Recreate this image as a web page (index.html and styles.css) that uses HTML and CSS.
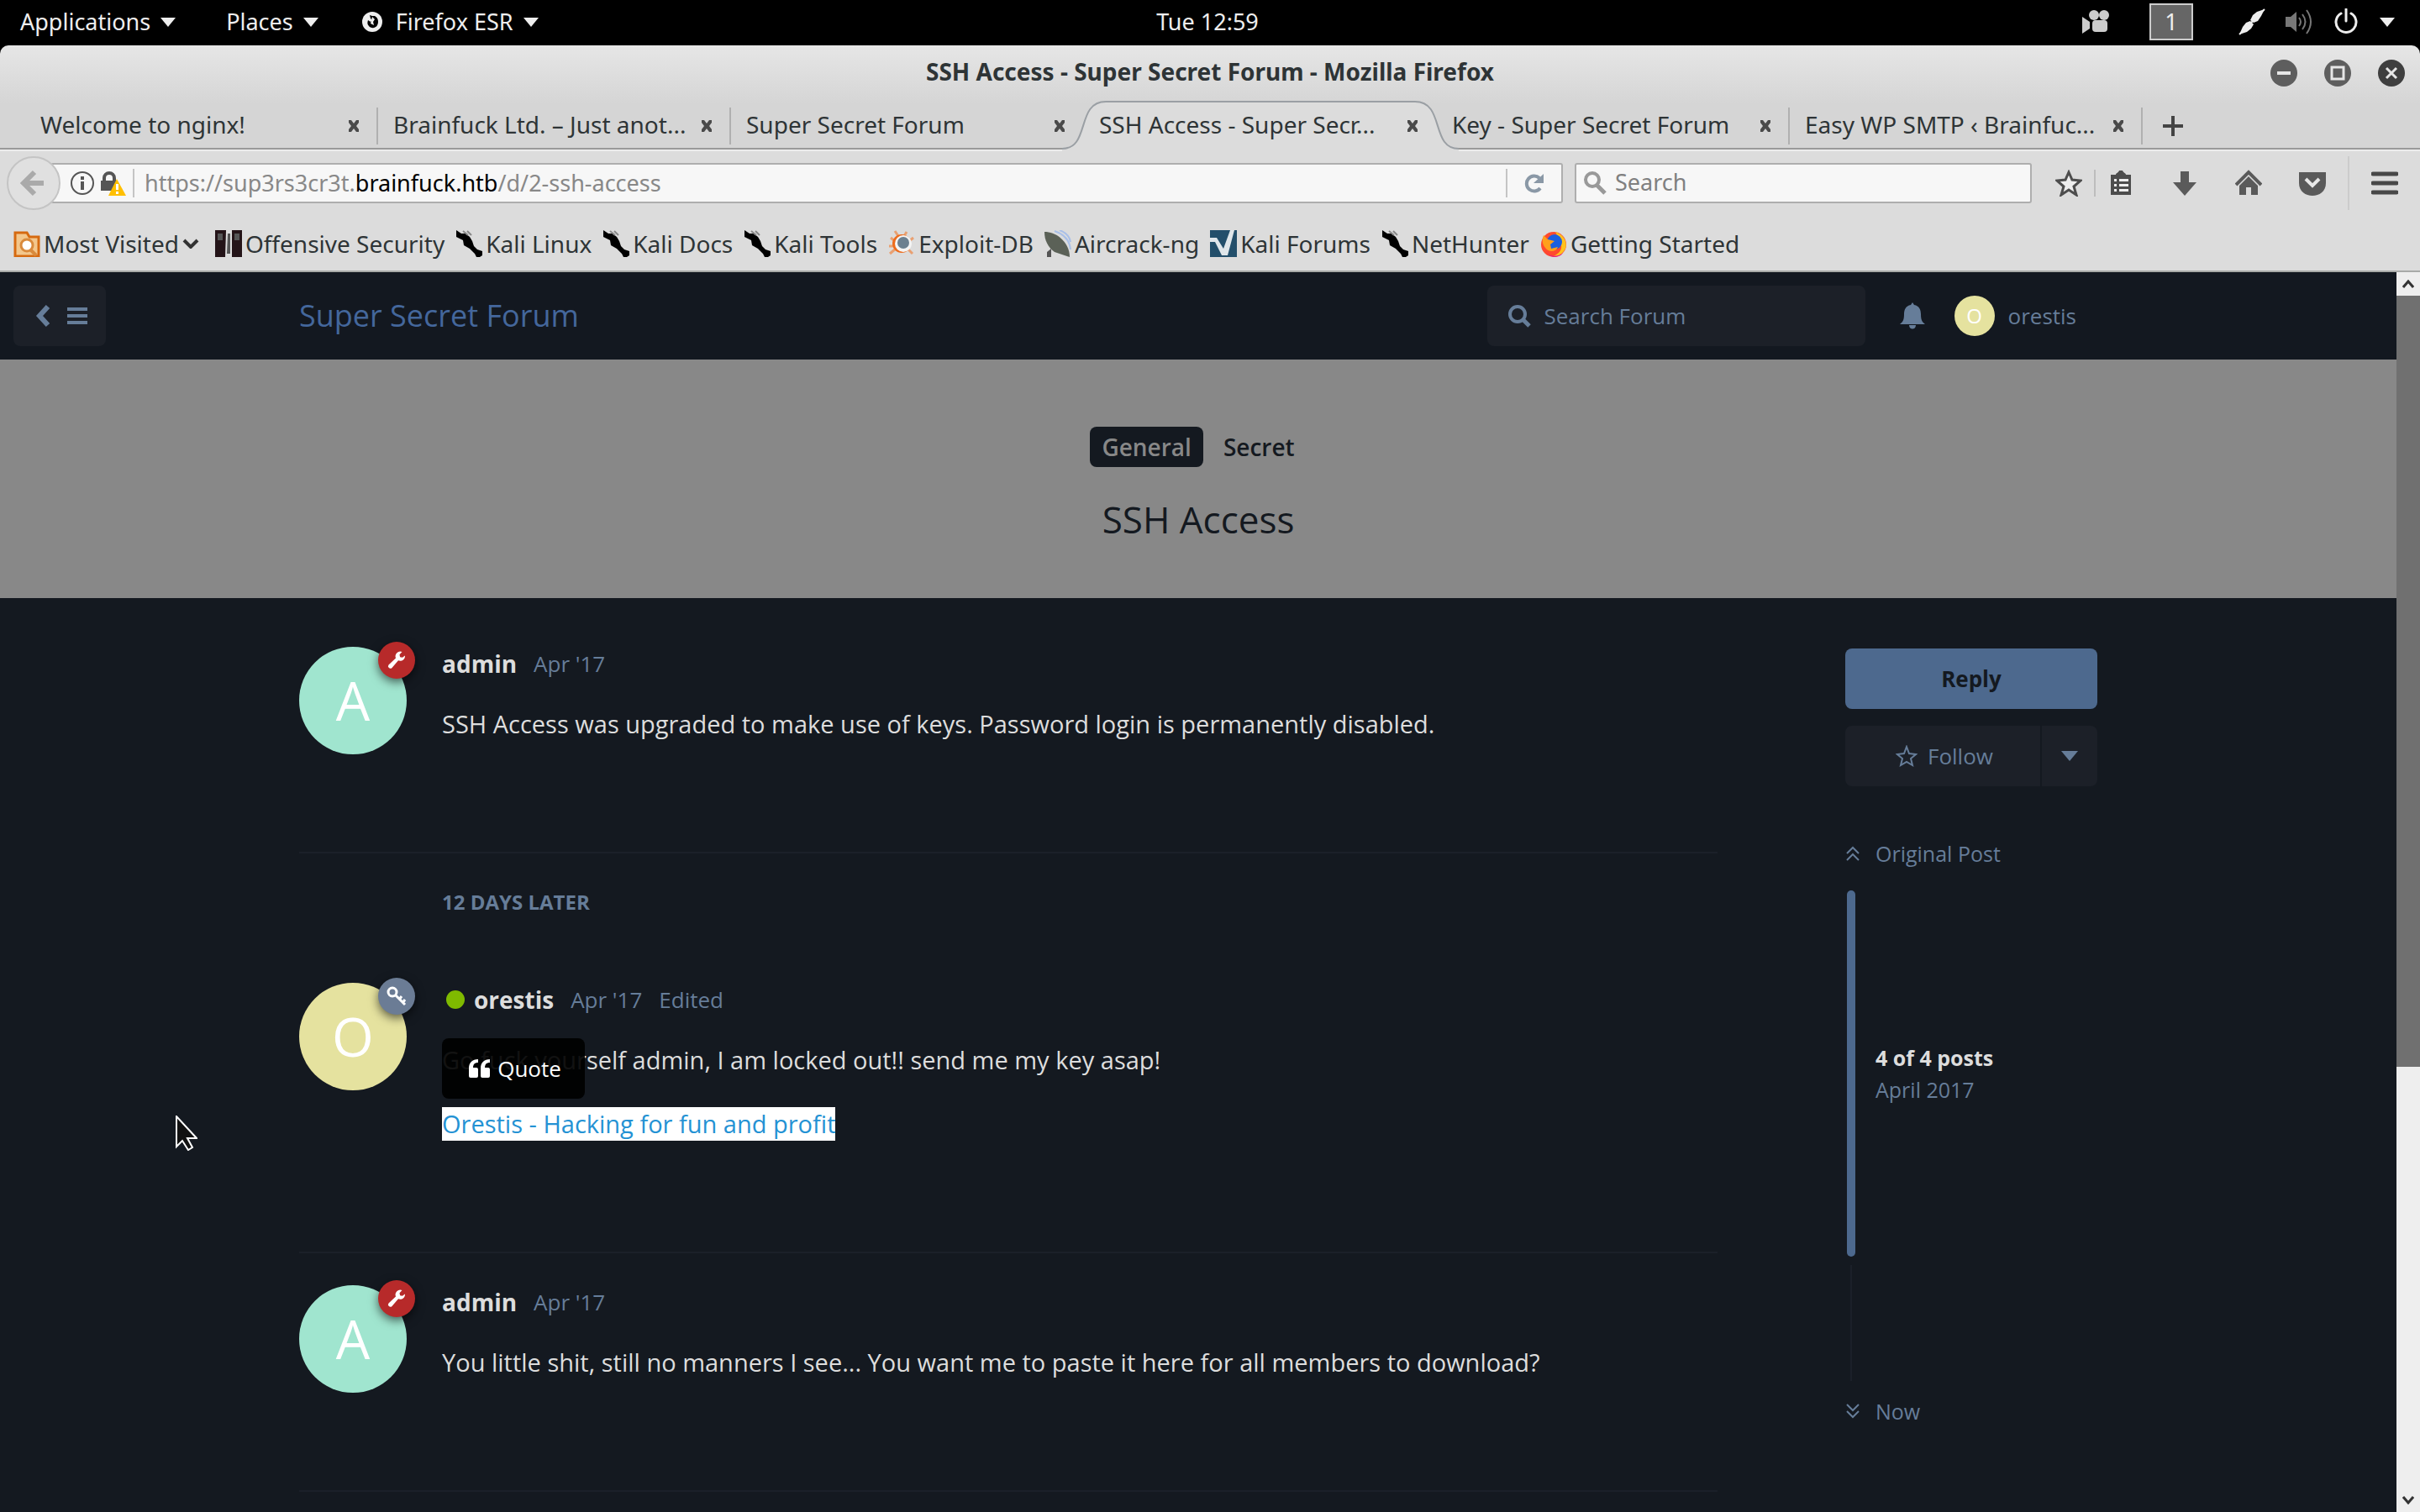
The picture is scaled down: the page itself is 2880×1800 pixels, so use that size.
FILE: index.html
```html
<!DOCTYPE html>
<html lang="en">
<head>
<meta charset="utf-8">
<title>SSH Access - Super Secret Forum</title>
<link rel="stylesheet" href="styles.css">
</head>
<body>
<svg class="defs" aria-hidden="true">
  <symbol id="i-close" viewBox="0 0 16 16"><path d="M2 1h3l3 4 3-4h3v3l-3 4 3 4v3h-3l-3-4-3 4H2v-3l3-4-3-4z"/></symbol>
  <symbol id="i-tri" viewBox="0 0 20 12"><path d="M0 0h20L10 12z"/></symbol>
  <symbol id="i-dragon" viewBox="0 0 32 32"><path d="M1 0l6 4h5l5 4 3 5 2 6 4 4 6 2v5l-3 2h-4l-2-4-6-6-7-4-1-6-8-4z"/><path d="M9 1l6 5M14 1l5 5" stroke="#888" stroke-width="2"/></symbol>
  <symbol id="i-wrench" viewBox="0 0 24 24"><path d="M22 6.500a5.800 5.800 0 0 1-8 5.800L6.500 21a2.700 2.700 0 0 1-4-3.600L11 9.500A5.800 5.800 0 0 1 18.500 2L15.500 5.200l.6 3 2.800.6z"/></symbol>
</svg>

<header class="topbar">
  <nav class="topbar-menus">
    <button class="menu">Applications <svg class="tri"><use href="#i-tri"/></svg></button>
    <button class="menu">Places <svg class="tri"><use href="#i-tri"/></svg></button>
    <button class="menu menu-app"><svg class="app-icon" viewBox="0 0 24 24"><circle cx="12" cy="12" r="12" fill="#eee"/><path d="M9 4l3 1h3c4 2 5 7 3 11-2 4-8 4-10 1-2-2-2-4-1-7l3 2 2-2-2-2z" fill="#000"/><path d="M12 6l3 3-2 3 1 4-4-2 1-4z" fill="#eee"/></svg>Firefox ESR <svg class="tri"><use href="#i-tri"/></svg></button>
  </nav>
  <time class="clock">Tue 12:59</time>
  <div class="tray">
    <svg class="tray-cam" viewBox="0 0 32 28"><g fill="#ccc"><circle cx="14" cy="6" r="6"/><circle cx="26" cy="6" r="6"/><rect x="12" y="12" width="18" height="14" rx="4"/><path d="M0 8l9 6v8l-9 6z"/></g></svg>
    <button class="workspace">1</button>
    <svg class="tray-icon tray-net" viewBox="0 0 32 32"><path d="M31 1l-4 8-4 6-5 2-4-3 3-6 5-4zM1 31l4-9 4-5 5-2 4 4-3 5-5 4z" fill="#eee"/><path d="M31 1L1 31" stroke="#eee" stroke-width="2"/></svg>
    <svg class="tray-icon" viewBox="0 0 32 32"><path d="M0 10h6l7-6v24l-7-6H0z" fill="#777"/><path d="M16 11q4 5 0 10M20 7q7 9 0 18M25 2q10 14 0 28" fill="none" stroke="#777" stroke-width="2"/></svg>
    <svg class="tray-icon" viewBox="0 0 32 32"><path d="M10 6a12 12 0 1 0 12 0M16 1v14" fill="none" stroke="#eee" stroke-width="3" stroke-linecap="round"/></svg>
    <svg class="tri"><use href="#i-tri"/></svg>
  </div>
</header>

<main class="window">
  <div class="titlebar">
    <h1 class="window-title">SSH Access - Super Secret Forum - Mozilla Firefox</h1>
    <div class="window-buttons">
      <button class="wbtn" aria-label="Minimize"><svg viewBox="0 0 32 32"><path d="M8 16h16" stroke="#e6e6e6" stroke-width="4"/></svg></button>
      <button class="wbtn" aria-label="Maximize"><svg viewBox="0 0 32 32"><rect x="9" y="9" width="14" height="14" fill="none" stroke="#e6e6e6" stroke-width="3"/></svg></button>
      <button class="wbtn wbtn-close" aria-label="Close"><svg viewBox="0 0 32 32"><path d="M10 10l12 12M22 10L10 22" stroke="#e6e6e6" stroke-width="3"/></svg></button>
    </div>
  </div>

  <div class="tabs">
    <div class="tab"><a href="#" class="tab-label">Welcome to nginx!</a><button class="tab-close" aria-label="Close tab"><svg><use href="#i-close"/></svg></button></div>
    <div class="tab"><a href="#" class="tab-label">Brainfuck Ltd. – Just anot...</a><button class="tab-close" aria-label="Close tab"><svg><use href="#i-close"/></svg></button></div>
    <div class="tab tab-before"><a href="#" class="tab-label">Super Secret Forum</a><button class="tab-close" aria-label="Close tab"><svg><use href="#i-close"/></svg></button></div>
    <div class="tab tab-active"><svg class="tab-shape" viewBox="0 0 472 62" preserveAspectRatio="none"><path d="M0 58C34 58 16 2 52 2H420C456 2 438 58 472 58V62H0z" fill="#dcdcdc"/><path d="M0 58C34 58 16 2 52 2H420C456 2 438 58 472 58" fill="none" stroke="#9a9fa4" stroke-width="2"/></svg><a href="#" class="tab-label">SSH Access - Super Secr...</a><button class="tab-close" aria-label="Close tab"><svg><use href="#i-close"/></svg></button></div>
    <div class="tab"><a href="#" class="tab-label">Key - Super Secret Forum</a><button class="tab-close" aria-label="Close tab"><svg><use href="#i-close"/></svg></button></div>
    <div class="tab"><a href="#" class="tab-label">Easy WP SMTP ‹ Brainfuc...</a><button class="tab-close" aria-label="Close tab"><svg><use href="#i-close"/></svg></button></div>
    <button class="tab-new" aria-label="New tab"><svg viewBox="0 0 24 24"><path d="M12 0v24M0 12h24" stroke="#444" stroke-width="4"/></svg></button>
  </div>

  <div class="navbar">
    <button class="back" aria-label="Back"><svg viewBox="0 0 32 32"><path d="M17 3L4 16l13 13M6 16h22" fill="none" stroke="#aaa" stroke-width="6"/></svg></button>
    <div class="urlbar">
      <svg class="url-info" viewBox="0 0 28 28"><circle cx="14" cy="14" r="13" fill="none" stroke="#555" stroke-width="2"/><path d="M12 12h4v10h-4zM12 6h4v4h-4z" fill="#555"/></svg>
      <svg class="url-lock" viewBox="0 0 30 30"><path d="M4 12V9a6 6 0 0 1 12 0v3" fill="none" stroke="#555" stroke-width="4"/><path d="M0 12h20v12H0z" fill="#555"/><path d="M19 10L30 30H9z" fill="#ffbf00"/><path d="M18 16h3v7h-3zM18 25h3v3h-3z" fill="#fff"/></svg>
      <div class="url-text" role="textbox" aria-label="Address" contenteditable="true" spellcheck="false">https://sup3rs3cr3t.<b>brainfuck.htb</b>/d/2-ssh-access</div>
      <button class="reload" aria-label="Reload"><svg viewBox="0 0 24 24"><path d="M19 18a9 9 0 1 1-1-12" fill="none" stroke="#8a98a6" stroke-width="4"/><path d="M23 1v11H11z" fill="#8a98a6"/></svg></button>
    </div>
    <label class="websearch">
      <svg viewBox="0 0 28 28"><circle cx="11" cy="10" r="8" fill="none" stroke="#999" stroke-width="4"/><path d="M16 16l10 10" stroke="#999" stroke-width="5"/></svg>
      <input type="text" placeholder="Search" aria-label="Search">
    </label>
    <div class="tools">
      <button aria-label="Bookmark"><svg viewBox="0 0 32 32"><path d="M16 3l4 9 10 1-8 7 3 10-9-6-9 6 3-10-8-7 10-1z" fill="#eee" stroke="#4d4d4d" stroke-width="3"/></svg></button>
      <button class="tool-clip" aria-label="Bookmarks list"><svg viewBox="0 0 32 32"><path d="M4 6h6c0-2 3-2 4-5h4c1 3 4 3 4 5h6v24H4z" fill="#4d4d4d"/><path d="M8 11h3v3H8zM14 11h11v3H14zM8 17h3v3H8zM14 17h11v3H14zM8 23h3v3H8zM14 23h11v3H14z" fill="#eee"/></svg></button>
      <button aria-label="Downloads"><svg viewBox="0 0 32 32"><path d="M11 2h10v13h9L16 31 2 15h9z" fill="#5a5a5a"/></svg></button>
      <button aria-label="Home"><svg viewBox="0 0 32 32"><path d="M1 18L16 3l15 15" fill="none" stroke="#5a5a5a" stroke-width="4"/><path d="M5 19L16 8l11 11v11h-8v-9h-6v9H5z" fill="#5a5a5a"/></svg></button>
      <button aria-label="Pocket"><svg viewBox="0 0 32 32"><path d="M0 3h32v13c0 20-32 20-32 0z" fill="#5a5a5a"/><path d="M8 11l8 8 8-8" fill="none" stroke="#e8e8e8" stroke-width="4"/></svg></button>
      <button class="tool-menu" aria-label="Menu"><svg viewBox="0 0 32 32"><path d="M2 5h28M2 16h28M2 27h28" stroke="#484848" stroke-width="5" stroke-linecap="round"/></svg></button>
    </div>
  </div>

  <nav class="bookmarks">
    <a href="#"><svg viewBox="0 0 32 32"><path d="M2 3h14l3 5h11v23H2z" fill="#f3c78c" stroke="#d66a10" stroke-width="3"/><circle cx="16" cy="18" r="7" fill="#fff" stroke="#d98a3c" stroke-width="3"/><path d="M20 23l7 7" stroke="#d98a3c" stroke-width="4"/></svg>Most Visited<svg class="chev" viewBox="0 0 20 12"><path d="M2 2l8 8 8-8" fill="none" stroke="#333" stroke-width="4"/></svg></a>
    <a href="#"><svg viewBox="0 0 32 32"><path d="M0 0h32v32H0z" fill="#241418"/><path d="M3 4h6v8H3zM23 4h6v8h-6z" fill="#555"/><path d="M13 0h7v32h-8z" fill="#ddd"/><path d="M15 4h3v24h-4z" fill="#555"/></svg>Offensive Security</a>
    <a href="#"><svg><use href="#i-dragon"/></svg>Kali Linux</a>
    <a href="#"><svg><use href="#i-dragon"/></svg>Kali Docs</a>
    <a href="#"><svg><use href="#i-dragon"/></svg>Kali Tools</a>
    <a href="#"><svg viewBox="0 0 32 32"><path d="M8 1l4 6M22 2l-3 5M3 9l5 4M30 9l-5 4M2 28l7-6M29 28l-6-6M1 19h6" stroke="#e9a071" stroke-width="3"/><circle cx="16" cy="16" r="11" fill="#ed6b1c"/><circle cx="18" cy="16" r="10" fill="#f4f4f4"/><circle cx="18" cy="15" r="7" fill="#6c8090"/></svg>Exploit-DB</a>
    <a href="#"><svg viewBox="0 0 32 32"><path d="M0 2c16 0 30 14 30 30L12 26C4 20 0 12 0 2z" fill="#5b6157"/><path d="M3 26l5-4v10H3z" fill="#555"/><path d="M12 1c12 4 18 12 19 22M18 0c8 3 12 8 13 14" fill="none" stroke="#a8bfe8" stroke-width="2"/></svg>Aircrack-ng</a>
    <a href="#"><svg viewBox="0 0 32 32"><path d="M0 0h32v32H0z" fill="#234f6b"/><path d="M0 9h8l8 13L24 0h5l-8 30h-7L6 14H0z" fill="#dfe6ea"/></svg>Kali Forums</a>
    <a href="#"><svg><use href="#i-dragon"/></svg>NetHunter</a>
    <a href="#"><svg viewBox="0 0 32 32"><circle cx="16" cy="17" r="15" fill="#ff4a2e"/><path d="M18 2c12 4 16 16 10 23-3 4-7 6-12 6 8-4 11-9 8-17z" fill="#ffc21c"/><path d="M7 24c3 8 14 9 20 3-3 6-16 8-20-3z" fill="#e5178f"/><circle cx="17" cy="14" r="9" fill="#1b5fe0"/><path d="M4 6l5 5 8 2-5 4 1 5 8-2c-2 6-11 7-15 1C2 16 2 11 4 6z" fill="#ffa01c"/></svg>Getting Started</a>
  </nav>

  <div class="viewport">
    <div class="page">
      <header class="forum-header">
        <button class="drawer" aria-label="Back and navigation"><svg viewBox="0 0 18 28"><path d="M15 3L5 14l10 11" fill="none" stroke="currentColor" stroke-width="6"/></svg><svg class="burger" viewBox="0 0 24 24"><path d="M0 4h24M0 12h24M0 20h24" stroke="currentColor" stroke-width="4"/></svg></button>
        <div class="forum-bar">
          <a class="brand" href="#">Super Secret Forum</a>
          <label class="forum-search">
            <svg viewBox="0 0 28 28"><circle cx="12" cy="12" r="9" fill="none" stroke="currentColor" stroke-width="4"/><path d="M18 18l8 8" stroke="currentColor" stroke-width="5"/></svg>
            <input type="text" placeholder="Search Forum" aria-label="Search Forum">
          </label>
          <button class="bell" aria-label="Notifications"><svg viewBox="0 0 30 32"><path d="M15 0l2 3c6 1 8 6 8 11 0 6 1 9 5 12H0c4-3 5-6 5-12 0-5 2-10 8-11zM11 27h8c0 6-8 6-8 0z" fill="currentColor"/></svg></button>
          <button class="session"><span class="avatar avatar-o avatar-sm">O</span>orestis</button>
        </div>
      </header>

      <section class="hero">
        <div class="tags"><a class="tag tag-filled" href="#">General</a><a class="tag" href="#">Secret</a></div>
        <h2>SSH Access</h2>
      </section>

      <div class="discussion">
        <div class="stream">
          <article class="post">
            <div class="post-user"><span class="avatar avatar-a">A</span><span class="badge badge-admin"><svg><use href="#i-wrench"/></svg></span></div>
            <div class="post-main">
              <div class="post-head"><a class="name" href="#">admin</a><time>Apr '17</time></div>
              <div class="post-body"><p>SSH Access was upgraded to make use of keys. Password login is permanently disabled.</p></div>
            </div>
          </article>

          <div class="gap-label">12 days later</div>

          <article class="post">
            <div class="post-user"><span class="avatar avatar-o">O</span><span class="badge badge-mod"><svg viewBox="0 0 24 24"><g fill="none" stroke="#fff"><circle cx="7" cy="7" r="5" stroke-width="3"/><path d="M10 10l12 12M15 16l3-4M19 20l3-4" stroke-width="3"/></g></svg></span></div>
            <div class="post-main">
              <div class="post-head"><span class="online"></span><a class="name" href="#">orestis</a><time>Apr '17</time><span>Edited</span></div>
              <div class="post-body">
                <p>Go fuck yourself admin, I am locked out!! send me my key asap!</p>
                <p><a class="signature" href="#">Orestis - Hacking for fun and profit</a></p>
                <button class="quote"><svg viewBox="0 0 26 24"><path d="M11 1v4c-4 0-6 2-6 6h4q2 0 2 2v8q0 2-2 2H2q-2 0-2-2v-9C0 5 4 1 11 1zM25 1v4c-4 0-6 2-6 6h4q2 0 2 2v8q0 2-2 2h-7q-2 0-2-2v-9C14 5 18 1 25 1z" fill="#fff"/></svg>Quote</button>
              </div>
            </div>
          </article>

          <article class="post">
            <div class="post-user"><span class="avatar avatar-a">A</span><span class="badge badge-admin"><svg><use href="#i-wrench"/></svg></span></div>
            <div class="post-main">
              <div class="post-head"><a class="name" href="#">admin</a><time>Apr '17</time></div>
              <div class="post-body"><p>You little shit, still no manners I see... You want me to paste it here for all members to download?</p></div>
            </div>
          </article>
        </div>

        <aside class="sidebar">
          <button class="reply">Reply</button>
          <div class="split">
            <button class="follow"><svg viewBox="0 0 26 26"><path d="M13 2l3 8 8 1-6 5 2 8-7-4-7 4 2-8-6-5 8-1z" fill="none" stroke="currentColor" stroke-width="2"/></svg>Follow</button>
            <button class="follow-more" aria-label="More"><svg class="caret"><use href="#i-tri"/></svg></button>
          </div>
          <div class="scrubber">
            <a class="scrub-link" href="#"><svg viewBox="0 0 18 18"><path d="M2 9l7-7 7 7M2 17l7-7 7 7" fill="none" stroke="currentColor" stroke-width="2"/></svg>Original Post</a>
            <div class="handle"><span class="handle-bar"></span><div><strong>4 of 4 posts</strong><span>April 2017</span></div></div>
            <div class="after"></div>
            <a class="scrub-link" href="#"><svg viewBox="0 0 18 18"><path d="M2 1l7 7 7-7M2 9l7 7 7-7" fill="none" stroke="currentColor" stroke-width="2"/></svg>Now</a>
          </div>
        </aside>
      </div>
    </div>
    <div class="scrollbar">
      <svg viewBox="0 0 14 10"><path d="M1 9l6-7 6 7" fill="none" stroke="#333" stroke-width="3"/></svg>
      <span class="thumb"></span>
      <svg viewBox="0 0 14 10"><path d="M1 1l6 7 6-7" fill="none" stroke="#333" stroke-width="3"/></svg>
    </div>
  </div>
</main>

<svg class="cursor" viewBox="0 0 26 42"><path d="M1 1v36l7-7 7 11 5-3-6-11h11z" fill="#111" stroke="#fff" stroke-width="2"/></svg>
</body>
</html>
```
FILE: styles.css
```css
:root {
  --bg: #141920;
  --panel: #1c2028;
  --muted: #667d99;
  --text: #dddddd;
  --primary: #4d698e;
  --chrome: #dcdcdc;
  --ink: #2e3436;
  --ui-font: "Noto Sans", "Open Sans", sans-serif;
  --page-font: "Open Sans", "Noto Sans", sans-serif;
}

* { box-sizing: border-box; }

body {
  margin: 0;
  height: 100vh;
  display: flex;
  flex-direction: column;
  overflow: hidden;
  background: #000;
  font: 28px/40px var(--ui-font);
  color: var(--ink);
}

button, input {
  margin: 0;
  padding: 0;
  border: 0;
  background: none;
  font: inherit;
  color: inherit;
}

a { color: inherit; text-decoration: none; }
svg { display: block; flex: none; }
.defs { position: absolute; width: 0; height: 0; }

/* Desktop panel */
.topbar {
  display: grid;
  grid-template-columns: 1fr auto 1fr;
  align-items: center;
  height: 54px;
  flex: none;
  padding: 0 30px 2px 24px;
  font-size: 27px;
  color: #eeeeee;
  fill: #eeeeee;
}
.topbar-menus { display: flex; gap: 60px; }
.menu { display: flex; align-items: center; gap: 12px; }
.menu-app { margin-left: -8px; }
.tri { width: 18px; height: 11px; }
.app-icon { width: 24px; height: 24px; margin-right: 4px; }
.tray { display: flex; align-items: center; justify-content: flex-end; gap: 24px; }
.tray-cam { width: 32px; height: 28px; margin-right: 24px; }
.workspace {
  width: 52px;
  height: 44px;
  margin-right: 30px;
  border: 2px solid #cccccc;
  background: #666666;
}
.tray-icon { width: 32px; height: 32px; }

/* Browser window */
.window {
  flex: 1;
  min-height: 0;
  display: flex;
  flex-direction: column;
  border-radius: 10px 10px 0 0;
  overflow: hidden;
  background: linear-gradient(#e6e6e6, #d5d5d5 70px);
}
.titlebar {
  display: grid;
  grid-template-columns: 1fr auto 1fr;
  align-items: center;
  height: 66px;
  flex: none;
  padding: 0 18px;
}
.window-title { grid-column: 2; margin: 0 0 4px; font-size: 28px; line-height: 40px; font-weight: 700; }
.window-buttons { display: flex; justify-content: flex-end; gap: 32px; }
.wbtn { width: 32px; height: 32px; border-radius: 50%; background: #5e5e5e; }
.wbtn-close { background: #3f3f3f; }

.tabs { display: flex; height: 58px; flex: none; padding-left: 30px; border-bottom: 2px solid #9a9a9a; }
.tab {
  position: relative;
  display: flex;
  align-items: center;
  width: 420px;
  padding: 4px 21px 0 18px;
  background: linear-gradient(#b0b0b0, #b0b0b0) right 8px / 2px 44px no-repeat;
}
.tab-before, .tab-active { background: none; }
.tab-label { flex: 1; position: relative; padding-bottom: 4px; white-space: nowrap; overflow: hidden; }
.tab-close { position: relative; width: 16px; height: 16px; fill: #4a4a4a; }
.tab-close svg { width: 16px; height: 16px; }
.tab-shape { position: absolute; left: -26px; top: -1px; width: 472px; height: 62px; }
.tab-new { width: 72px; display: flex; align-items: center; justify-content: center; padding-top: 4px; }
.tab-new svg { width: 24px; height: 24px; }

.navbar {
  display: flex;
  align-items: center;
  height: 78px;
  flex: none;
  padding: 0 26px 0 8px;
  background: var(--chrome);
  border-top: 2px solid #ececec;
}
.back {
  position: relative;
  width: 64px;
  height: 64px;
  display: flex;
  align-items: center;
  justify-content: center;
  border: 2px solid #c4c4c4;
  border-radius: 50%;
  background: #e0e0e0;
}
.back svg { width: 32px; height: 32px; }
.urlbar, .websearch {
  display: flex;
  align-items: center;
  height: 48px;
  border: 2px solid #aeaeae;
  border-radius: 3px;
  background: #f7f7f7;
}
.urlbar { flex: 1; margin-left: -12px; padding-left: 24px; border-left: 0; }
.url-info { width: 28px; height: 28px; }
.url-lock { width: 30px; height: 30px; margin: 0 8px; }
.url-text {
  flex: 1;
  padding-left: 12px;
  border-left: 2px solid #c4c4c4;
  line-height: 34px;
  font-size: 27px;
  color: #888888;
  white-space: nowrap;
}
.url-text b { font-weight: 400; color: #000000; }
.reload { width: 66px; height: 34px; padding-left: 20px; border-left: 2px solid #c4c4c4; }
.reload svg { width: 24px; height: 24px; }
.websearch { width: 544px; margin-left: 14px; padding-left: 8px; font-size: 27px; }
.websearch svg { width: 28px; height: 28px; }
.websearch input { flex: 1; min-width: 0; padding: 0 0 2px 10px; }
.websearch input::placeholder { color: #808080; opacity: 1; }
.tools { display: flex; align-items: center; gap: 44px; padding-left: 28px; }
.tools svg { width: 32px; height: 32px; }
.tool-clip { margin-left: -30px; padding-left: 14px; border-left: 2px solid #bdbdbd; }
.tool-menu { margin-left: -18px; padding: 16px 0 16px 26px; border-left: 2px solid #cccccc; }

.bookmarks {
  display: flex;
  align-items: center;
  gap: 13px;
  height: 68px;
  flex: none;
  padding: 2px 16px 0;
  background: var(--chrome);
  border-bottom: 2px solid #a8aaa8;
}
.bookmarks a { display: flex; align-items: center; gap: 4px; white-space: nowrap; }
.bookmarks svg { width: 32px; height: 32px; }
.bookmarks .chev { width: 20px; height: 12px; margin-right: 6px; }

/* Page area */
.viewport { flex: 1; min-height: 0; display: flex; }
.page {
  flex: 1;
  min-width: 0;
  overflow: hidden;
  background: var(--bg);
  font-family: var(--page-font);
  color: var(--text);
}
.scrollbar {
  width: 28px;
  display: flex;
  flex-direction: column;
  align-items: center;
  background: #eeeeee;
}
.scrollbar svg { width: 14px; height: 10px; margin: 9px 0; }
.thumb { width: 100%; height: 918px; margin-bottom: auto; background: #707070; }

.forum-header {
  display: grid;
  grid-template-columns: 1fr minmax(0, 2140px) 1fr;
  align-items: center;
  height: 104px;
  background: #131820;
  font-size: 26px;
  color: var(--muted);
}
.drawer {
  display: flex;
  align-items: center;
  justify-content: center;
  gap: 20px;
  width: 110px;
  height: 72px;
  margin-left: 16px;
  padding-left: 4px;
  border-radius: 8px;
  background: var(--panel);
}
.drawer svg { width: 18px; height: 28px; }
.drawer .burger { width: 24px; height: 24px; }
.forum-bar { grid-column: 2; display: flex; align-items: center; }
.brand { flex: 1; font-size: 36px; color: #44679c; }
.forum-search {
  display: flex;
  align-items: center;
  gap: 16px;
  width: 450px;
  height: 72px;
  padding: 0 24px;
  border-radius: 8px;
  background: var(--panel);
}
.forum-search svg { width: 28px; height: 28px; }
.forum-search input { flex: 1; min-width: 0; }
.forum-search input::placeholder { color: var(--muted); opacity: 1; }
.bell { margin-left: 41px; }
.bell svg { width: 30px; height: 32px; }
.session { display: flex; align-items: center; gap: 16px; margin-left: 35px; padding-right: 25px; }

.avatar {
  display: flex;
  align-items: center;
  justify-content: center;
  width: 128px;
  height: 128px;
  border-radius: 50%;
  font-size: 64px;
  line-height: 128px;
  color: #ffffff;
}
.avatar-a { background: #a0e5cf; }
.avatar-o { background: #e5e29f; }
.avatar-sm { width: 48px; height: 48px; font-size: 24px; line-height: 48px; }

.hero { height: 284px; padding-top: 80px; background: #888888; text-align: center; color: var(--bg); }
.tags { display: flex; justify-content: center; gap: 10px; }
.tag { padding: 4px 14px; border-radius: 8px; font-size: 28px; line-height: 40px; font-weight: 600; }
.tag-filled { background: var(--bg); color: #888888; }
.hero h2 { margin: 32px 0 0; font-size: 44px; line-height: 60px; font-weight: 400; }

.discussion {
  display: flex;
  gap: 152px;
  max-width: 2140px;
  margin: 0 auto;
  padding-top: 20px;
}
.stream { flex: 1; min-width: 0; }
.post {
  display: flex;
  gap: 42px;
  padding: 38px 0 128px;
  border-bottom: 2px solid #1b2029;
}
.post-user { position: relative; width: 128px; height: 116px; }
.badge {
  position: absolute;
  right: -10px;
  top: -6px;
  display: flex;
  align-items: center;
  justify-content: center;
  width: 44px;
  height: 44px;
  border-radius: 50%;
  box-shadow: 0 4px 12px rgba(0, 0, 0, 0.6);
}
.badge svg { width: 24px; height: 24px; fill: #ffffff; }
.badge-admin { background: #b72a2a; }
.badge-mod { background: #6b7c95; }
.post-main { flex: 1; min-width: 0; }
.post-head { display: flex; align-items: center; gap: 20px; height: 40px; font-size: 26px; color: var(--muted); }
.name { font-size: 28px; font-weight: 700; color: var(--text); }
.online { width: 22px; height: 22px; margin: 0 -9px 0 5px; border-radius: 50%; background: #7fba00; }
.post-body {
  position: relative;
  display: flex;
  flex-direction: column;
  gap: 28px;
  padding-top: 28px;
  font-size: 29px;
  line-height: 48px;
}
.post-body p { margin: 0; }
.signature { display: inline-block; line-height: 40px; background: #ffffff; color: #2492d4; }
.quote {
  position: absolute;
  left: 0;
  top: 26px;
  display: flex;
  align-items: center;
  justify-content: center;
  gap: 8px;
  width: 170px;
  height: 72px;
  padding-left: 4px;
  border-radius: 8px;
  background: rgba(0, 0, 0, 0.92);
  font-size: 26px;
  color: #ffffff;
}
.quote svg { width: 26px; height: 24px; }
.gap-label {
  height: 116px;
  padding-left: 170px;
  font-size: 24px;
  line-height: 116px;
  font-weight: 700;
  text-transform: uppercase;
  color: var(--muted);
}

.sidebar { width: 300px; padding-top: 40px; font-size: 26px; color: var(--muted); }
.sidebar button { height: 72px; border-radius: 8px; background: var(--panel); }
.sidebar .reply { display: block; width: 100%; background: var(--primary); font-weight: 700; color: var(--bg); }
.split { display: flex; gap: 2px; margin: 20px 0 60px; }
.sidebar .follow {
  flex: 1;
  display: flex;
  align-items: center;
  justify-content: center;
  gap: 12px;
  padding-left: 4px;
  border-radius: 8px 0 0 8px;
}
.follow svg { width: 26px; height: 26px; }
.sidebar .follow-more {
  display: flex;
  align-items: center;
  justify-content: center;
  width: 66px;
  border-radius: 0 8px 8px 0;
}
.caret { width: 20px; height: 12px; fill: currentColor; }
.scrubber { font-size: 25px; }
.scrub-link { display: flex; align-items: center; gap: 18px; height: 40px; }
.scrub-link svg { width: 18px; height: 18px; }
.handle { display: flex; align-items: center; gap: 24px; height: 436px; margin: 24px 0 10px 2px; line-height: 38px; }
.handle-bar { width: 10px; height: 100%; border-radius: 5px; background: var(--primary); }
.handle strong, .handle div span { display: block; }
.handle strong { color: var(--text); }
.after { width: 2px; height: 138px; margin: 0 0 16px 6px; background: #1b2029; }

.cursor { position: absolute; left: 209px; top: 1328px; width: 26px; height: 42px; }
```
